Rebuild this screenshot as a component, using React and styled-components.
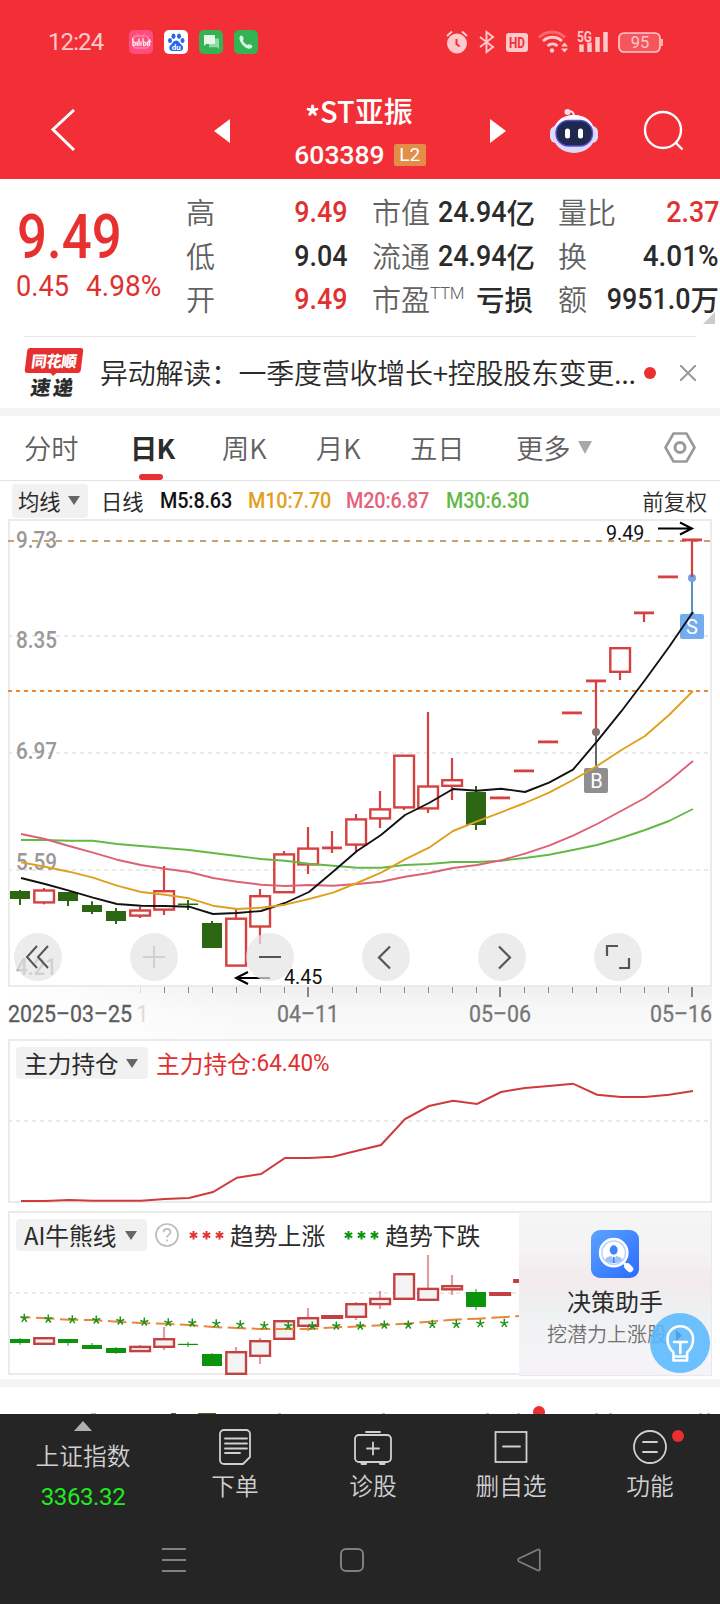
import React from "react";
import styled, { createGlobalStyle } from "styled-components";

const CJK = '"Noto Sans CJK SC", "Noto Sans", sans-serif';
const NUM = 'Roboto, "Noto Sans CJK SC", sans-serif';
const RED = "#e03131";
const INK = "#2b2b2b";
const MUTED = "#626262";

const Global = createGlobalStyle`
  * { box-sizing: border-box; }
  html, body { margin: 0; padding: 0; background: #fff; }
  body { width: 720px; font-family: ${CJK}; color: ${INK}; }
  svg { display: block; flex: none; }
`;

const Screen = styled.div`
  width: 720px;
  height: 1604px;
  overflow: hidden;
  display: flex;
  flex-direction: column;
  background: #fff;
`;

/* Condensed numerals: glyphs squeezed toward one edge */
const Digits = styled.span`
  display: inline-block;
  white-space: nowrap;
  font-family: ${NUM};
  font-size: ${(p) => p.$size || 30}px;
  font-weight: ${(p) => p.$weight || 500};
  color: ${(p) => p.$color || INK};
  transform: scaleX(${(p) => p.$squeeze || 0.9});
  transform-origin: ${(p) => p.$origin || "left"} center;
`;

/* ---------- header ---------- */
const Header = styled.header`
  height: 179px;
  background: #f22f37;
  display: flex;
  flex-direction: column;
  flex: none;
`;
const StatusBar = styled.div`
  height: 83px;
  display: flex;
  align-items: center;
  justify-content: space-between;
  padding: 0 56px 0 48px;
`;
const StatusGroup = styled.div`
  display: flex;
  align-items: center;
  gap: ${(p) => p.$gap}px;
`;
const Clock = styled.span`
  width: 71px;
  font: 400 24px/28px ${NUM};
  letter-spacing: -0.9px;
  color: #ffc9cb;
`;
const NavBar = styled.div`
  height: 96px;
  display: grid;
  grid-template-columns: 214px 16px 260px 16px 44px 48px 52px 1fr;
  align-items: center;
`;
const NavSlot = styled.div`
  padding-left: ${(p) => p.$indent || 0}px;
`;
const TitleBlock = styled.div`
  height: 96px;
  display: flex;
  flex-direction: column;
  align-items: center;
`;
const StockName = styled.div`
  margin-top: 7px;
  height: 40px;
  display: flex;
  font: 500 29px/40px ${CJK};
  color: #fff;
  white-space: nowrap;
`;
const SpecialMark = styled.span`
  padding-top: 5px;
  margin-left: -2px;
  font-weight: 700;
`;
const CodeLine = styled.div`
  height: 32px;
  margin-top: 10px;
  display: flex;
  align-items: center;
  gap: 9px;
  padding-bottom: 3px;
  line-height: 30px;
`;
const LevelBadge = styled.span`
  width: 32px;
  height: 22px;
  border-radius: 2px;
  background: #e28e49;
  color: #fff;
  font: 400 19px/22px ${NUM};
  text-align: center;
`;

/* ---------- quote ---------- */
const Quote = styled.section`
  height: 157px;
  display: grid;
  grid-template-columns: 186px 161px 25px 161px 25px 161px;
  position: relative;
`;
const PriceBlock = styled.div`
  padding-left: 16px;
`;
const BigPrice = styled.div`
  height: 64px;
  margin-top: 25px;
  padding-left: 1px;
  line-height: 66px;
`;
const ChangeLine = styled.div`
  height: 36px;
  line-height: 36px;
  display: flex;
`;
const ChangeCell = styled.div`
  width: ${(p) => p.$w}px;
`;
const StatColumn = styled.div`
  display: flex;
  flex-direction: column;
  padding-top: 11px;
`;
const Stat = styled.div`
  height: 43.5px;
  line-height: 43.5px;
  display: flex;
  justify-content: space-between;
  white-space: nowrap;
`;
const StatLabel = styled.span`
  font-size: 29px;
  font-weight: 350;
  color: ${MUTED};
  display: flex;
`;
const Sup = styled.span`
  font: 300 17px/32px ${NUM};
  letter-spacing: -0.4px;
`;
const StatValue = styled.span`
  display: flex;
`;
const Unit = styled.span`
  font-size: 28.5px;
  font-weight: 500;
`;
const Corner = styled.i`
  position: absolute;
  right: 5px;
  bottom: 12px;
  border-left: 12px solid transparent;
  border-bottom: 12px solid #ccc;
`;

/* ---------- news ---------- */
const News = styled.section`
  height: 72px;
  margin: 0 24px;
  border-top: 1px solid #e8e8e8;
  display: flex;
  align-items: center;
`;
const NewsLogo = styled.div`
  width: 60px;
  height: 50px;
`;
const LogoTop = styled.div`
  position: relative;
  width: 56px;
  height: 25px;
  margin-left: 2px;
  background: #e5302f;
  border-radius: 3px;
  transform: skewX(-7deg);
  color: #fff;
  font-size: 15.5px;
  font-weight: 900;
  line-height: 24px;
  text-align: center;
  letter-spacing: -0.6px;
  &::after {
    content: "";
    position: absolute;
    left: 25px;
    top: 24px;
    border: 4px solid transparent;
    border-top-color: #e5302f;
  }
`;
const LogoBottom = styled.div`
  font-size: 20px;
  font-weight: 900;
  line-height: 27px;
  letter-spacing: 2.5px;
  padding-left: 7px;
  transform: skewX(-8deg);
  color: #2c2c2c;
`;
const NewsText = styled.div`
  width: 542px;
  padding-left: 16px;
  padding-bottom: 1px;
  font-size: 28px;
  line-height: 40px;
  font-weight: 350;
  letter-spacing: -0.28px;
  white-space: nowrap;
`;
const Dot = styled.i`
  width: 12px;
  height: 12px;
  border-radius: 50%;
  background: #e83030;
  flex: none;
`;
const Band = styled.div`
  height: 8px;
  background: #f4f4f4;
  flex: none;
`;

/* ---------- tabs ---------- */
const Tabs = styled.nav`
  height: 65px;
  border-bottom: 1px solid #e4e4e4;
  padding-left: 24px;
  display: grid;
  grid-template-columns: 106px 92px 94px 94px 106px 148px 1fr;
`;
const Tab = styled.div`
  display: flex;
  align-items: center;
  gap: 7px;
  height: 64px;
  position: relative;
  font-size: 27.3px;
  line-height: 62px;
  padding-bottom: 2px;
  font-weight: ${(p) => (p.$active ? 700 : 350)};
  letter-spacing: ${(p) => (p.$active ? -0.8 : 0)}px;
  color: ${(p) => (p.$active ? "#2c2c2c" : "#606060")};
  white-space: nowrap;
`;
const Underline = styled.i`
  position: absolute;
  left: 9px;
  bottom: 0;
  width: 24px;
  height: 6px;
  border-radius: 3px;
  background: #e83030;
`;
const Caret = styled.i`
  border: ${(p) => p.$w / 2}px solid transparent;
  border-top: ${(p) => p.$h}px solid ${(p) => p.$color};
  border-bottom: 0;
`;

/* ---------- indicator legend ---------- */
const Legend = styled.div`
  height: 38px;
  padding: 2px 13px 2px 12px;
  display: grid;
  grid-template-columns: 89px 59px 88px 98px 100px 1fr auto;
  align-items: center;
  line-height: 34px;
`;
const Pill = styled.div`
  width: ${(p) => p.$w}px;
  height: ${(p) => p.$h}px;
  border-radius: 4px;
  background: #f1f1f1;
  display: flex;
  align-items: center;
  justify-content: space-between;
  padding: 0 ${(p) => p.$end || 10}px 0 ${(p) => p.$pad}px;
  font-size: ${(p) => p.$size}px;
  line-height: ${(p) => p.$h - 1}px;
  white-space: nowrap;
`;
const LegendText = styled.span`
  font-size: ${(p) => p.$size}px;
  white-space: nowrap;
  color: ${(p) => p.$color || INK};
  font-weight: ${(p) => p.$weight || 400};
  line-height: 32px;
`;
const LegendNum = styled(Digits)`
  padding-top: 1px;
  letter-spacing: -0.15px;
`;

/* ---------- charts ---------- */
const ChartBox = styled.div`
  position: relative;
  height: ${(p) => p.$h}px;
  flex: none;
`;
const Controls = styled.div`
  position: absolute;
  left: 14px;
  top: 414px;
  display: flex;
  gap: 68px;
`;
const RoundButton = styled.button`
  width: 48px;
  height: 48px;
  padding: 0;
  border: 0;
  border-radius: 50%;
  background: rgba(228, 228, 228, 0.72);
`;
const PanelHead = styled.div`
  position: absolute;
  left: 16px;
  top: 8px;
  height: 32px;
  display: flex;
  align-items: center;
  line-height: 32px;
`;
const Spacer = styled.i`
  width: ${(p) => p.$w}px;
`;
const Stars = styled.span`
  display: flex;
  width: 41px;
`;
const Promo = styled.aside`
  position: absolute;
  left: 519px;
  top: 0;
  width: 193px;
  height: 165px;
  border: 1px solid #e9e9ec;
  border-left: 0;
  background: linear-gradient(180deg, #f5f5f6 0%, #f5f3f4 22%, #f2eaed 42%, #eef1f1 60%, #f4f3f6 85%, #f5f3f7 100%);
  display: flex;
  flex-direction: column;
  align-items: center;
  padding-top: 18px;
`;
const PromoTitle = styled.div`
  font-size: 24px;
  line-height: 36px;
  margin-top: 5px;
`;
const PromoSub = styled.div`
  font-size: 20px;
  font-weight: 350;
  line-height: 30px;
  color: #707070;
  white-space: nowrap;
  padding-right: 16px;
`;
const Bulb = styled.div`
  position: absolute;
  left: 650px;
  top: 102px;
`;
const Peek = styled.div`
  height: 27px;
  flex: none;
`;

/* ---------- bottom ---------- */
const Bottom = styled.footer`
  height: 190px;
  background: #252525;
  flex: none;
`;
const BottomNav = styled.div`
  height: 108px;
  display: grid;
  grid-template-columns: 166px 138px 138px 138px 140px;
`;
const BottomItem = styled.div`
  position: relative;
  display: flex;
  flex-direction: column;
  align-items: center;
  color: #d0d0d0;
  font-size: 23.7px;
  font-weight: 350;
  padding-top: ${(p) => p.$top || 14}px;
`;
const BottomLabel = styled.span`
  line-height: 34px;
  margin-top: ${(p) => p.$gap || 0}px;
`;
const IndexValue = styled.span`
  font: 400 24px/34px Roboto, sans-serif;
  letter-spacing: -0.4px;
  color: #20ec20;
  margin-top: 8px;
`;
const ItemDot = styled(Dot)`
  position: absolute;
  left: 92px;
  top: 16px;
`;
const SystemNav = styled.div`
  height: 76px;
  display: grid;
  grid-template-columns: 162px 178px 177px 1fr;
  align-items: center;
`;

/* ---------- data ---------- */
const xs = (i) => 20 + 24 * i;
// [kind, body top, body bottom, high, low]
const candles = [
  ["g", 891, 899, 890, 905], ["r", 889.3, 903.6, 888, 904.3], ["g", 892, 901, 892, 906],
  ["g", 905, 912, 901.3, 914], ["g", 911, 921, 908, 924], ["r", 909.3, 916.8, 906.7, 918],
  ["r", 890, 910.8, 866, 915], ["g", 903.5, 905, 900, 910], ["g", 923, 948, 921, 948],
  ["r", 917.5, 966.8, 909.3, 966], ["r", 895, 927.7, 889, 944], ["r", 853.2, 893.4, 851, 893],
  ["r", 847.4, 865.6, 827, 874], ["d", 848, 848, 831, 853], ["r", 818.2, 845.8, 814, 851],
  ["r", 808.2, 819.6, 791, 828], ["r", 754.5, 808.6, 755, 810], ["r", 785.3, 809.6, 712, 813],
  ["r", 779, 787, 758, 800], ["g", 792, 825, 786, 830], ["d", 798, 798], ["d", 771, 771],
  ["d", 742, 742], ["d", 713, 713], ["d", 681, 681, 681, 730], ["r", 647, 673, 647, 680],
  ["d", 613, 613, 613, 622], ["d", 577, 577], ["d", 540, 540, 540, 577],
];
const ma5 = [878, 884, 890.7, 897.7, 904, 905.7, 906, 906.7, 914, 913, 911, 903, 892, 871.7, 851, 835, 815, 803, 789, 790.7, 788.7, 792, 782.7, 769.7, 741.3, 711.7, 680, 647, 612];
const ma10 = [862.3, 866.7, 871.7, 877.7, 885.7, 892, 894.7, 898.3, 905.7, 909, 907.7, 904.7, 899, 892.7, 883, 872.7, 859.3, 847.7, 831, 821.3, 812.3, 803, 792.7, 780, 766, 750.3, 736, 715, 691];
const ma20 = [834, 839, 846, 852.7, 859.7, 865, 868.7, 872, 878, 881.7, 884.7, 886, 885, 885.7, 884, 881.7, 876.7, 873, 868, 865, 860.3, 853.7, 845.7, 835.7, 824, 811, 798, 781, 761];
const ma30 = [840, 840, 840.7, 840.7, 844, 846, 848, 850, 853, 856, 859, 860.7, 863.7, 865.7, 867.7, 867.7, 865, 864, 862, 862, 860.7, 858, 854.7, 850, 845, 838, 830, 821, 809];
const hold = [1201, 1201, 1200, 1200.7, 1200.7, 1200.7, 1199, 1198, 1192, 1177.7, 1174, 1158, 1158, 1156.7, 1150.7, 1145, 1119, 1106, 1100.7, 1104, 1092, 1088, 1086, 1083.7, 1094.7, 1097, 1097, 1094.7, 1091];
const trend = [1317, 1318.3, 1319.7, 1320, 1321.7, 1323, 1323.7, 1325, 1327, 1328, 1329, 1329, 1329, 1327.5, 1326.5, 1325.3, 1323.7, 1321.7, 1319.7, 1318.7, 1317.3, 1315.7];
const marks = [865, 867, 869, 870, 873, 876, 878, 879, 881, 884, 887, 888, 888, 888, 888, 885, 885, 883, 883, 881, 880];
const aiCandles = [
  ["g", 1339, 1343, 1338, 1344.7], ["r", 1337, 1345], ["g", 1339, 1343, 1339, 1345.7],
  ["g", 1345, 1349, 1343, 1349], ["g", 1348, 1353, 1347, 1354], ["r", 1345.7, 1352.3, 1345, 1352],
  ["r", 1338, 1348, 1327, 1350], ["g", 1343.8, 1345, 1342, 1347], ["g", 1354, 1366, 1353, 1366],
  ["r", 1351, 1375, 1347, 1375], ["r", 1340, 1357, 1338, 1364], ["r", 1320, 1340],
  ["r", 1317, 1327, 1308, 1331], ["r", 1315, 1319], ["r", 1303, 1318, 1302, 1320],
  ["r", 1297.7, 1305.3, 1291, 1309], ["r", 1273, 1300], ["r", 1287.7, 1301, 1255, 1301],
  ["r", 1285, 1290.5, 1275, 1295], ["g", 1292, 1307, 1289, 1310], ["r", 1292, 1296],
  ["r", 1279, 1283],
];
const line = (ys) => ys.map((y, i) => `${xs(i) + 1},${y}`).join(" ");

const CandleSet = ({ data, up, down, wickOpacity = 1, fill = "#fff" }) =>
  data.map(([k, t, b, h, l], i) => {
    const x = xs(i);
    if (k === "g")
      return (
        <g key={i} fill={down}>
          <rect x={x - 10} y={t} width="20" height={b - t} />
          <rect x={x - 1} y={h} width="2" height={l - h} opacity={wickOpacity} />
        </g>
      );
    const wick = h !== undefined;
    if (k === "d")
      return (
        <g key={i} fill={up}>
          <rect x={x - 10} y={t - 1.5} width="20" height="2.8" />
          {wick && <rect x={x - 1.1} y={h} width="2.2" height={l - h} />}
        </g>
      );
    return (
      <g key={i}>
        {wick && <rect x={x - 1.1} y={h} width="2.2" height={l - h} fill={up} opacity={wickOpacity} />}
        <rect x={x - 9.7} y={t + 1.2} width="19.7" height={b - t - 2.4} fill={fill} stroke={up} strokeWidth="2.4" />
      </g>
    );
  });

const Dashed = ({ y, x2 = 708 }) => (
  <line x1="8" x2={x2} y1={y} y2={y} stroke="#e9e9e9" strokeWidth="2" strokeDasharray="4 4" />
);

const KChart = () => (
  <svg width="720" height="468" viewBox="0 519 720 468">
    <rect x="9" y="520" width="702" height="466" fill="#fff" stroke="#ebebeb" strokeWidth="2" />
    <Dashed y={636} />
    <Dashed y={753} />
    <Dashed y={870} />
    <line x1="8" x2="710" y1="541" y2="541" stroke="#c8a06c" strokeWidth="2" strokeDasharray="6 6" />
    <line x1="8" x2="708" y1="691" y2="691" stroke="#ee8833" strokeWidth="2" strokeDasharray="4 4" />
    <g fill="#999" fontFamily="Roboto, sans-serif" fontSize="23" fontWeight="500">
      {[["9.73", 548], ["8.35", 648], ["6.97", 759], ["5.59", 870], ["4.21", 975]].map(([t, y]) => (
        <text key={t} x="16" y={y} textLength="41" lengthAdjust="spacingAndGlyphs">{t}</text>
      ))}
    </g>
    <line x1="692" x2="692" y1="578" y2="613" stroke="#5b93bd" strokeWidth="2" />
    <circle cx="692" cy="578" r="4" fill="#6fa3e4" />
    <path d="M688 615l4-4 4 4z" fill="#75acee" />
    <rect x="680" y="614" width="24" height="25" rx="2" fill="#75acee" />
    <text x="692" y="634" textAnchor="middle" fontFamily="Roboto, sans-serif" fontSize="20" fill="#fff">S</text>
    <CandleSet data={candles} up="#d64040" down="#2d6612" />
    <line x1="596" x2="596" y1="732" y2="768" stroke="#666" strokeWidth="2" />
    <circle cx="596" cy="732" r="4" fill="#8b7474" />
    <path d="M592 769l4-4 4 4z" fill="#8f8f8f" />
    <rect x="584" y="768" width="24" height="25" rx="2" fill="#8f8f8f" />
    <text x="596.5" y="788" textAnchor="middle" fontFamily="Roboto, sans-serif" fontSize="20" fill="#fff">B</text>
    <g fill="none" strokeWidth="1.9" strokeLinejoin="round">
      <polyline points={line(ma30)} stroke="#64b946" />
      <polyline points={line(ma20)} stroke="#dd6175" />
      <polyline points={line(ma5)} stroke="#111" />
      <polyline points={line(ma10)} stroke="#dfa01e" />
    </g>
    <g fill="none" stroke="#000" strokeWidth="2">
      <path d="M658 528.500H692M680 522.500l12 6-12 6" />
      <path d="M270 978H236M248 972l-12 6 12 6" />
    </g>
    <g fontFamily="Roboto, sans-serif" fontSize="19.700" fill="#111">
      <text x="606" y="540">9.49</text>
      <text x="284" y="984">4.45</text>
    </g>
  </svg>
);

const controlIcons = [
  <path d="M23 13L13 24l10 11M34 13L24 24l10 11" stroke="#555" strokeWidth="2" />,
  <path d="M13 24h22M24 13v22" stroke="#d0d0d0" strokeWidth="2" />,
  <path d="M13 24h22" stroke="#555" strokeWidth="2" />,
  <path d="M28 13.5L17 24.5l11 11" stroke="#555" strokeWidth="2.2" />,
  <path d="M21 13.5l11 11-11 11" stroke="#555" strokeWidth="2.2" />,
  <path d="M13 23V13h11M25 35h10V25" stroke="#555" strokeWidth="2.2" />,
];

const Axis = () => (
  <svg width="720" height="52" viewBox="0 987 720 52">
    <defs>
      <linearGradient id="axV" x1="0" y1="0" x2="0" y2="1">
        <stop offset="0" stopColor="#f0f0f0" />
        <stop offset="0.5" stopColor="#f8f8f8" />
        <stop offset="1" stopColor="#fbfbfb" />
      </linearGradient>
      <linearGradient id="axH" x1="0" y1="0" x2="1" y2="0">
        <stop offset="0" stopColor="#fff" />
        <stop offset="0.35" stopColor="#fff" stopOpacity="0.7" />
        <stop offset="1" stopColor="#fff" stopOpacity="0" />
      </linearGradient>
    </defs>
    <rect x="8" y="987" width="704" height="52" fill="url(#axV)" />
    <rect x="8" y="987" width="240" height="52" fill="url(#axH)" />
    {Array.from({ length: 24 }, (_, k) => k + 5).map((i) => {
      const major = i % 8 === 4;
      return (
        <rect key={i} x={xs(i) - (major ? 1 : 0)} y="987" width={major ? 2 : 1} height={major ? 10 : 6} fill={i === 5 ? "#ddd" : "#888"} />
      );
    })}
    <g fontFamily="Roboto, sans-serif" fontSize="23" fontWeight="400" fill="#777" stroke="#777" strokeWidth="0.3">
      <text x="8" y="1022" fill="#5c5c5c" stroke="#5c5c5c" textLength="124" lengthAdjust="spacingAndGlyphs">2025–03–25</text>
      <text x="136" y="1022" fill="#ddd" stroke="none">1</text>
      <text x="277" y="1022" textLength="62" lengthAdjust="spacingAndGlyphs">04–11</text>
      <text x="469" y="1022" textLength="62" lengthAdjust="spacingAndGlyphs">05–06</text>
      <text x="650" y="1022" textLength="62" lengthAdjust="spacingAndGlyphs">05–16</text>
    </g>
  </svg>
);

const HoldChart = () => (
  <svg width="720" height="164" viewBox="0 1039 720 164">
    <rect x="9" y="1040" width="702" height="162" fill="#fff" stroke="#ebebeb" strokeWidth="2" />
    <Dashed y={1121} />
    <polyline points={line(hold)} fill="none" stroke="#cf3a3a" strokeWidth="2" />
  </svg>
);

const AiChart = () => (
  <svg width="720" height="168" viewBox="0 1211 720 168">
    <rect x="9" y="1212" width="702" height="162" fill="#fff" stroke="#ebebeb" strokeWidth="2" />
    <Dashed y={1293} x2={519} />
    <CandleSet data={aiCandles} up="#c54040" down="#0b930b" wickOpacity={0.5} fill="#f3f3f3" />
    <polyline points={line(trend)} fill="none" stroke="#e8873a" strokeWidth="2" strokeDasharray="18.5 5.5" strokeDashoffset="9" />
    {marks.map((m, i) => (
      <path
        key={i}
        transform={`translate(${24.3 + 24 * i} ${1030 + m / 3})`}
        d="M0-4.5V0M-4-1.5L0 0l4-1.5M-2.5 3.5L0 0l2.5 3.5"
        fill="none"
        stroke="#1b941b"
        strokeWidth="1.5"
      />
    ))}
  </svg>
);

const Asterisks = ({ color }) => (
  <Stars>
    <svg width="36" height="12" viewBox="0 0 36 12" stroke={color} strokeWidth="2">
      {[4.5, 17.5, 30.5].map((x) => (
        <path key={x} d={`M${x} 2v8.500M${x - 3.7} 4l7.400 4.400M${x + 3.7} 4l-7.400 4.400`} />
      ))}
    </svg>
  </Stars>
);

const AppIcons = () => (
  <svg width="129" height="24" viewBox="0 0 129 24">
    <rect width="24" height="24" rx="5" fill="#ff4d7e" />
    <rect x="4.500" y="6" width="15" height="12" rx="3" fill="none" stroke="#ff83a4" strokeWidth="1.400" />
    <path d="M8 3l2 3M16 3l-2 3" stroke="#ff83a4" />
    <g fill="none" stroke="#ffeaf0" strokeWidth="1.300" strokeLinecap="round">
      <path d="M3.500 8.500l.6 7c3.500.5 3.500-4 .2-3.300M8.200 12v3.500M10 9v6.500M12 12v3.500M14 8.500l.6 7c3.300.3 3.200-3.600.2-3.300M18.500 12v3.500M20.500 9.500v6M19.600 11.500h2" />
    </g>
    <rect x="35" width="24" height="24" rx="5" fill="#fff" />
    <g fill="#2468e8">
      <ellipse cx="44.500" cy="6.200" rx="2" ry="2.700" />
      <ellipse cx="50" cy="6.200" rx="2" ry="2.700" />
      <ellipse cx="41" cy="10.500" rx="2" ry="2.500" />
      <ellipse cx="53.500" cy="10.500" rx="2" ry="2.500" />
      <path d="M47.200 10.500c3 0 3.300 3 5.300 4.300 3 2.200 1.500 6.300-1.700 6.300h-7.200c-3.200 0-4.700-4.100-1.700-6.300 2-1.300 2.300-4.300 5.300-4.300z" />
    </g>
    <text x="47.200" y="19.600" textAnchor="middle" fontFamily="Roboto, sans-serif" fontWeight="700" fontSize="8" fill="#fff">du</text>
    <rect x="70" width="24" height="24" rx="5" fill="#34b254" />
    <path d="M80 8.500h10v10.500l-2-1.700H80z" fill="#92dba4" />
    <path d="M75 5h11v9H77l-2 2z" fill="#e4f7e8" />
    <rect x="105" width="24" height="24" rx="5" fill="#34b254" />
    <path d="M111 6.200c1-1.400 2.400-.8 3.200.8.7 1.400.6 2.300-.3 3.200.7 2.200 2.600 4 4.700 4.700 1-.9 1.900-.9 3.300-.2 1.500.8 1.900 1.800 1 2.900-1.900 2.100-5.200 1.400-8.100-1.500-3.100-3.100-5.400-7.500-3.800-9.900z" fill="#d9f5df" />
  </svg>
);

const StatusIcons = () => (
  <svg width="218" height="26" viewBox="446 28 218 26" fill="none" stroke="#ffc9cb">
    <circle cx="457" cy="42.500" r="10" fill="#ffc9cb" stroke="none" />
    <path d="M447 35l5-4.500M467 35l-5-4.500" strokeWidth="2" />
    <path d="M456.500 38v5l3 2.500" stroke="#f22f37" strokeWidth="2" />
    <path d="M480 36l13 10-6.500 5V31l6.500 5-13 10" strokeWidth="1.900" />
    <rect x="506" y="32" width="22" height="19" rx="3" fill="#ffc9cb" stroke="none" />
    <text x="517" y="47" textAnchor="middle" fontFamily="Roboto, sans-serif" fontWeight="700" fontSize="15" textLength="16" lengthAdjust="spacingAndGlyphs" fill="#f22f37" stroke="none">HD</text>
    <path d="M539 36.500c7-7.500 19-7.500 26 0" stroke="#f9686e" strokeWidth="3" />
    <path d="M543 40c5.500-5 13.500-5 19 0M547.500 45c3-2.700 7-2.700 10 0" strokeWidth="2.900" />
    <circle cx="552" cy="49.500" r="2.200" fill="#ffc9cb" stroke="none" />
    <path d="M561 45.500l3.500-4 3.500 4zM561 47.500l3.500 4 3.500-4z" fill="#ffc9cb" stroke="none" />
    <text x="577" y="40.500" fontFamily="Roboto, sans-serif" fontWeight="700" fontSize="14.500" textLength="15" lengthAdjust="spacingAndGlyphs" fill="#ffc9cb" stroke="none">5G</text>
    <path d="M581.500 43.500v7.500M589.500 41.500v9.500M597.500 36v15M605.500 31v20" strokeWidth="4.500" />
    <rect x="619" y="32" width="41" height="19" rx="5" strokeWidth="1.700" fill="#f6555c" />
    <path d="M662 38v7" strokeWidth="1.700" />
    <text x="640" y="47.300" textAnchor="middle" fontFamily="Roboto, sans-serif" fontSize="16.500" fill="#ffc9cb" stroke="none">95</text>
  </svg>
);

const Robot = () => (
  <svg width="48" height="46" viewBox="0 0 48 46">
    <path d="M17 3.500c4-1 7 0 7 5" fill="none" stroke="#f5e9f7" strokeWidth="2" />
    <circle cx="17.500" cy="4" r="3" fill="#f0dff0" />
    <rect x="0" y="18" width="12" height="17" rx="6" fill="#dddcf9" />
    <rect x="36" y="18" width="12" height="17" rx="6" fill="#dddcf9" />
    <ellipse cx="24" cy="26" rx="21.500" ry="19" fill="#dcdaf8" />
    <path d="M4.500 20C8 10 16 7 24 7s16 3 19.500 13c-8-8-31-8-39 0z" fill="#fbfaff" />
    <rect x="6" y="12.500" width="36.500" height="25.500" rx="12.500" fill="#1f2950" stroke="#5b4bd4" strokeWidth="1.400" />
    <rect x="15" y="20.500" width="5" height="10" rx="2.500" fill="#fff" />
    <rect x="28" y="20.500" width="5" height="10" rx="2.500" fill="#fff" />
  </svg>
);

const NavTriangle = ({ flip }) => (
  <svg width="16" height="24" viewBox="0 0 16 24">
    <path d={flip ? "M0 0l16 12L0 24z" : "M16 0L0 12l16 12z"} fill="#fff" />
  </svg>
);

const PromoIcon = () => (
  <svg width="48" height="48" viewBox="0 0 48 48">
    <defs>
      <linearGradient id="pi" x1="0" y1="0" x2="1" y2="1">
        <stop offset="0" stopColor="#5ba4ff" />
        <stop offset="1" stopColor="#2a6bff" />
      </linearGradient>
    </defs>
    <rect width="48" height="48" rx="9" fill="url(#pi)" />
    <circle cx="22.700" cy="22.700" r="13.700" fill="#b7d3ff" stroke="#fff" strokeWidth="2.400" />
    <circle cx="22.700" cy="22.700" r="11" fill="#fff" />
    <ellipse cx="22.700" cy="20" rx="4" ry="4.700" fill="#3f86fb" />
    <path d="M14 30c1-3 4-3.500 6.500-4l2.200 7.300c-3.500 0-7-1.200-8.700-3.300zM31.400 30c-1-3-4-3.500-6.500-4l-2.200 7.300c3.500 0 7-1.200 8.700-3.300z" fill="#9dc2fb" />
    <path d="M22.700 27v6" stroke="#3f86fb" strokeWidth="2" />
    <path d="M33 33l2.500 2.500" stroke="#fff" strokeWidth="2.500" />
    <path d="M36.500 36.500l2.500 2.500" stroke="#fff" strokeWidth="6.500" strokeLinecap="round" />
  </svg>
);

const BulbIcon = () => (
  <svg width="60" height="60" viewBox="0 0 60 60">
    <circle cx="30" cy="30" r="30" fill="#5ab8ff" fillOpacity="0.88" />
    <path d="M26 17l6 5.500-6 5.500z" fill="#4d9fe0" />
    <g fill="none" stroke="#fff" strokeWidth="2.600" strokeLinejoin="round" strokeLinecap="round">
      <path d="M23.500 47.500V39.500C19.500 36 17.500 31 17.500 26a12.800 12.800 0 0 1 25.600 0c0 5-2 10-6 13.500v8z" />
      <path d="M24 43.500h13M24 29h13M30.300 29v11" />
    </g>
  </svg>
);

const stroke = { fill: "none", stroke: "#d0d0d0", strokeWidth: 1.8, strokeLinecap: "round", strokeLinejoin: "round" };

const stats = [
  [["高", "9.49", RED], ["低", "9.04"], ["开", "9.49", RED]],
  [["市值", "24.94", INK, "亿"], ["流通", "24.94", INK, "亿"], ["市盈", "", INK, "亏损"]],
  [["量比", "2.37", RED], ["换", "4.01%"], ["额", "9951.0", INK, "万"]],
];

const StatCol = ({ rows }) => (
  <StatColumn>
    {rows.map(([label, value, color, unit]) => (
      <Stat key={label}>
        <StatLabel>
          {label}
          {label === "市盈" && <Sup>TTM</Sup>}
        </StatLabel>
        <StatValue>
          {value && (
            <Digits $color={color} $origin="right" $squeeze={value.includes("%") ? 0.93 : 0.895}>{value}</Digits>
          )}
          {unit && <Unit>{unit}</Unit>}
        </StatValue>
      </Stat>
    ))}
  </StatColumn>
);

export default function App() {
  return (
    <Screen>
      <Global />
      <Header>
        <StatusBar>
          <StatusGroup $gap={10}>
            <Clock>12:24</Clock>
            <AppIcons />
          </StatusGroup>
          <StatusIcons />
        </StatusBar>
        <NavBar>
          <NavSlot $indent={50}>
            <svg width="26" height="44" viewBox="0 0 26 44"><path d="M24 1L3 20.500l21 20.500" fill="none" stroke="#fff" strokeWidth="3" /></svg>
          </NavSlot>
          <NavSlot><NavTriangle /></NavSlot>
          <TitleBlock>
            <StockName><SpecialMark>*</SpecialMark>ST亚振</StockName>
            <CodeLine>
              <Digits $size={26.5} $color="#fff" $squeeze={1}>603389</Digits>
              <LevelBadge>L2</LevelBadge>
            </CodeLine>
          </TitleBlock>
          <NavSlot><NavTriangle flip /></NavSlot>
          <NavSlot />
          <NavSlot><Robot /></NavSlot>
          <NavSlot $indent={44}>
            <svg width="42" height="42" viewBox="0 0 42 42" fill="none" stroke="#fff" strokeWidth="2.400">
              <circle cx="21" cy="20" r="18" />
              <path d="M33.500 32.500l7 7" />
            </svg>
          </NavSlot>
        </NavBar>
      </Header>

      <Quote>
        <PriceBlock>
          <BigPrice><Digits $size={61} $color="#e83030" $squeeze={0.865}>9.49</Digits></BigPrice>
          <ChangeLine>
            <ChangeCell $w={70}><Digits $size={29.5} $color={RED} $weight={450} $squeeze={0.92}>0.45</Digits></ChangeCell>
            <ChangeCell $w={80}><Digits $size={29.5} $color={RED} $weight={450} $squeeze={0.95}>4.98%</Digits></ChangeCell>
          </ChangeLine>
        </PriceBlock>
        <StatCol rows={stats[0]} />
        <span />
        <StatCol rows={stats[1]} />
        <span />
        <StatCol rows={stats[2]} />
        <Corner />
      </Quote>

      <News>
        <NewsLogo>
          <LogoTop>同花顺</LogoTop>
          <LogoBottom>速递</LogoBottom>
        </NewsLogo>
        <NewsText>异动解读：一季度营收增长+控股股东变更...</NewsText>
        <Spacer $w={18} />
        <Dot />
        <Spacer $w={24} />
        <svg width="16" height="16" viewBox="0 0 16 16"><path d="M0 0l16 16M16 0L0 16" stroke="#999" strokeWidth="2" /></svg>
      </News>
      <Band />

      <Tabs>
        <Tab>分时</Tab>
        <Tab $active>日K<Underline /></Tab>
        <Tab>周K</Tab>
        <Tab>月K</Tab>
        <Tab>五日</Tab>
        <Tab>更多<Caret $w={15} $h={13} $color="#a9a9a9" /></Tab>
        <Tab>
          <svg width="32" height="32" viewBox="0 0 32 32" fill="none" stroke="#999" strokeWidth="2.600" strokeLinejoin="round">
            <path d="M9.500 2.500h13L30.500 16.500l-8 14h-13L1.500 16.500z" />
            <circle cx="16" cy="16.500" r="5" strokeWidth="3" />
          </svg>
        </Tab>
      </Tabs>

      <Legend>
        <Pill $w={76} $h={34} $pad={6} $end={8} $size={21.3}>均线<Caret $w={12} $h={9} $color="#666" /></Pill>
        <LegendText $size={21.3}>日线</LegendText>
        <LegendNum $size={22} $color="#111" $squeeze={0.9}>M5:8.63</LegendNum>
        <LegendNum $size={22} $color="#dfa01e" $squeeze={0.9}>M10:7.70</LegendNum>
        <LegendNum $size={22} $color="#e4627a" $squeeze={0.9}>M20:6.87</LegendNum>
        <LegendNum $size={22} $color="#64b946" $squeeze={0.9}>M30:6.30</LegendNum>
        <LegendText $size={21.6} $weight={350}>前复权</LegendText>
      </Legend>

      <ChartBox $h={468}>
        <KChart />
        <Controls>
          {controlIcons.map((icon, i) => (
            <RoundButton key={i}>
              <svg width="48" height="48" viewBox="0 0 48 48" fill="none">{icon}</svg>
            </RoundButton>
          ))}
        </Controls>
      </ChartBox>
      <Axis />

      <ChartBox $h={172}>
        <HoldChart />
        <PanelHead>
          <Pill $w={132} $h={32} $pad={8} $size={23.7}>主力持仓<Caret $w={12} $h={9} $color="#666" /></Pill>
          <Spacer $w={8} />
          <LegendText $size={23.7} $color={RED}>主力持仓</LegendText>
          <Digits $size={24.5} $color={RED} $weight={450} $squeeze={0.92}>:64.40%</Digits>
        </PanelHead>
      </ChartBox>

      <ChartBox $h={168}>
        <AiChart />
        <PanelHead>
          <Pill $w={131} $h={32} $pad={8} $size={23.7}>AI牛熊线<Caret $w={12} $h={9} $color="#666" /></Pill>
          <Spacer $w={8} />
          <svg width="24" height="24" viewBox="0 0 24 24" fill="none" stroke="#bcbcbc" strokeWidth="1.700">
            <circle cx="12" cy="12" r="11" />
            <path d="M8.500 9.300c0-4.500 7-4.500 7 0 0 2.500-3.500 2.700-3.500 5.200M12 16.500v2" />
          </svg>
          <Spacer $w={10} />
          <Asterisks color="#e23434" />
          <LegendText $size={23.8}>趋势上涨</LegendText>
          <Spacer $w={19} />
          <Asterisks color="#0b960b" />
          <LegendText $size={23.8}>趋势下跌</LegendText>
        </PanelHead>
        <Promo>
          <PromoIcon />
          <PromoTitle>决策助手</PromoTitle>
          <PromoSub>挖潜力上涨股</PromoSub>
        </Promo>
        <Bulb><BulbIcon /></Bulb>
      </ChartBox>
      <Band />
      <Peek>
        <svg width="720" height="27" viewBox="0 1387 720 27">
          <circle cx="539" cy="1412" r="6" fill="#e83030" />
          <g fill="#6b5420">
            <rect x="91" y="1413" width="5" height="1" opacity=".4" />
            <rect x="171" y="1413" width="5" height="1" />
            <rect x="198" y="1413" width="18" height="1" />
          </g>
          <g fill="#bbb">
            {[278, 382, 486, 517, 595, 609, 699, 707].map((x) => <rect key={x} x={x} y="1413" width="3" height="1" />)}
          </g>
        </svg>
      </Peek>

      <Bottom>
        <BottomNav>
          <BottomItem $top={7}>
            <svg width="18" height="10" viewBox="0 0 18 10"><path d="M9 0l9 10H0z" fill="#b0b0b0" /></svg>
            <BottomLabel $gap={7}>上证指数</BottomLabel>
            <IndexValue>3363.32</IndexValue>
          </BottomItem>
          <BottomItem>
            <svg width="36" height="38" viewBox="0 0 36 38" {...stroke}>
              <path d="M6 2h22a4 4 0 0 1 4 4v23l-7 7H6a4 4 0 0 1-4-4V6a4 4 0 0 1 4-4z" transform="translate(1 0)" />
              <path d="M8 10.500h22M8 15.500h22M8 20.500h22M8 25h15" />
            </svg>
            <BottomLabel $gap={2}>下单</BottomLabel>
          </BottomItem>
          <BottomItem>
            <svg width="40" height="38" viewBox="0 0 40 38" {...stroke}>
              <rect x="2" y="7" width="36" height="27" rx="4" />
              <path d="M13 4h14M14 20.500h12M20 14.500v12" />
              <path d="M9 35.500h3.500M27.500 35.500H31" strokeWidth="3" />
            </svg>
            <BottomLabel $gap={2}>诊股</BottomLabel>
          </BottomItem>
          <BottomItem>
            <svg width="36" height="38" viewBox="0 0 36 38" {...stroke} strokeLinejoin="miter">
              <rect x="2.500" y="4" width="31" height="30" />
              <path d="M10 18.500h17" />
            </svg>
            <BottomLabel $gap={2}>删自选</BottomLabel>
          </BottomItem>
          <BottomItem>
            <svg width="36" height="38" viewBox="0 0 36 38" {...stroke}>
              <circle cx="18" cy="19" r="16" />
              <path d="M11 14h14M11 24h14" />
            </svg>
            <BottomLabel $gap={2}>功能</BottomLabel>
            <ItemDot />
          </BottomItem>
        </BottomNav>
        <SystemNav>
          <NavSlot />
          <svg width="24" height="24" viewBox="0 0 24 24"><path d="M0 1h24M0 12h24M0 23h24" stroke="#808080" strokeWidth="2" /></svg>
          <svg width="24" height="24" viewBox="0 0 24 24"><rect x="1" y="1" width="22" height="22" rx="5" fill="none" stroke="#808080" strokeWidth="2" /></svg>
          <svg width="24" height="24" viewBox="0 0 24 24"><path d="M21 1.500L2 10.500c-1.200.7-1.200 2.300 0 3L21 22.500c1 .3 1.800-.2 1.800-1.200V2.700c0-1-.8-1.500-1.800-1.200z" fill="none" stroke="#808080" strokeWidth="1.700" /></svg>
        </SystemNav>
      </Bottom>
    </Screen>
  );
}
